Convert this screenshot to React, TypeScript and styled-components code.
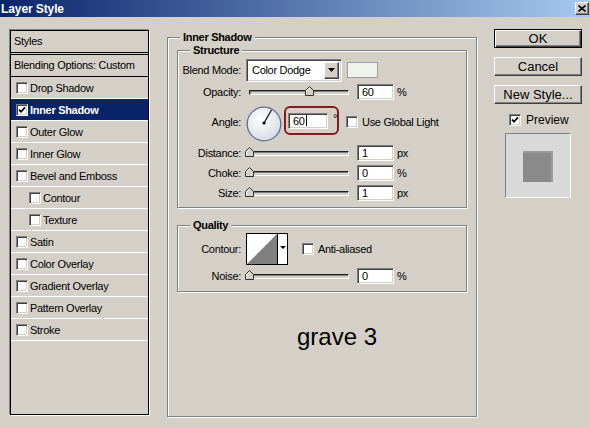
import styled, { createGlobalStyle, css } from 'styled-components'

const GlobalStyle = createGlobalStyle`
  html, body {
    margin: 0;
    padding: 0;
    background: #d4d0c8;
  }
  body {
    font-family: 'Liberation Sans', Tahoma, Arial, sans-serif;
    font-size: 11px;
    letter-spacing: -0.3px;
    color: #000;
  }
`

type StyleItem = { label: string; checked?: boolean; selected?: boolean; indent?: boolean }

const styleItems: StyleItem[] = [
  { label: 'Drop Shadow' },
  { label: 'Inner Shadow', checked: true, selected: true },
  { label: 'Outer Glow' },
  { label: 'Inner Glow' },
  { label: 'Bevel and Emboss' },
  { label: 'Contour', indent: true },
  { label: 'Texture', indent: true },
  { label: 'Satin' },
  { label: 'Color Overlay' },
  { label: 'Gradient Overlay' },
  { label: 'Pattern Overlay' },
  { label: 'Stroke' },
]

const sunken = css`
  border: 1px solid;
  border-color: #808080 #fff #fff #808080;
  box-shadow: inset 1px 1px 0 #404040, inset -1px -1px 0 #d4d0c8;
`

const raised = css`
  border: 1px solid;
  border-color: #fff #404040 #404040 #fff;
  box-shadow: inset -1px -1px 0 #808080, inset 1px 1px 0 #d4d0c8;
`

const Window = styled.div`
  width: 590px;
  height: 428px;
  background: #d4d0c8;
  overflow: hidden;
`

const TitleBar = styled.div`
  height: 17px;
  display: flex;
  align-items: center;
  justify-content: space-between;
  padding: 0 1px;
  background: linear-gradient(to right, #0a246a, #a6caf0);
`

const Title = styled.span`
  color: #fff;
  font-weight: bold;
  font-size: 12px;
  letter-spacing: -0.1px;
`

const CloseButton = styled.span`
  width: 14px;
  height: 13px;
  box-sizing: border-box;
  background: #d4d0c8;
  display: flex;
  align-items: center;
  justify-content: center;
  ${raised}
`

const Body = styled.div`
  display: flex;
  align-items: flex-start;
  padding-left: 10px;
`

/* ---------- left list ---------- */

const StylesPanel = styled.div`
  width: 139px;
  height: 385px;
  margin-top: 13px;
  box-sizing: border-box;
  border: 1px solid #000;
  box-shadow: -1px -1px 0 #808080, 1px 1px 0 #fff;
  flex: none;
`

const PanelHeader = styled.div`
  height: 21px;
  line-height: 21px;
  padding-left: 3px;
  border-bottom: 3px double #000;
`

const BlendingRow = styled.div`
  height: 21px;
  line-height: 21px;
  padding-left: 3px;
  border-bottom: 1px solid #000;
`

const StyleRow = styled.div<{ $indent?: boolean; $selected?: boolean }>`
  height: 21px;
  display: flex;
  align-items: center;
  gap: 2px;
  padding-left: ${p => (p.$indent ? 18 : 5)}px;
  border-bottom: 1px solid #fff;
  ${p =>
    p.$selected &&
    css`
      background: #0a246a;
      color: #fff;
      font-weight: bold;
    `}
`

const CheckBox = styled.span`
  width: 12px;
  height: 12px;
  box-sizing: border-box;
  flex: none;
  background: #fff;
  display: flex;
  align-items: center;
  justify-content: center;
  ${sunken}
`

const Check = ({ on }: { on?: boolean }) => (
  <CheckBox>
    {on && (
      <svg width="8" height="8" viewBox="0 0 8 8">
        <path d="M1 3.6 L3 5.8 L7 1.4" fill="none" stroke="#000" strokeWidth="1.7" />
      </svg>
    )}
  </CheckBox>
)

/* ---------- center ---------- */

const Main = styled.div`
  width: 310px;
  margin: 14px 0 0 18px;
  flex: none;
`

const Group = styled.fieldset<{ $outer?: boolean }>`
  margin: 0;
  min-width: 0;
  box-sizing: border-box;
  border: 1px solid #808080;
  box-shadow: inset 1px 1px 0 #fff, 1px 1px 0 #fff;
  ${p =>
    p.$outer
      ? css`
          height: 386px;
          padding: 0 9px;
        `
      : css`
          padding: 0;
        `}
`

const Legend = styled.legend<{ $ml: number }>`
  margin-left: ${p => p.$ml}px;
  padding: 0 3px;
  font-weight: bold;
  line-height: 13px;
  background: #d4d0c8;
`

const Row = styled.div<{ $h: number }>`
  display: flex;
  align-items: center;
  height: ${p => p.$h}px;
`

const Label = styled.span`
  width: 63px;
  margin-right: 5px;
  text-align: right;
  flex: none;
`

const SelectBox = styled.div`
  width: 96px;
  height: 23px;
  box-sizing: border-box;
  background: #fff;
  display: flex;
  align-items: center;
  padding: 2px;
  ${sunken}
`

const SelectText = styled.span`
  flex: 1;
  padding-left: 3px;
`

const SelectButton = styled.span`
  width: 15px;
  height: 17px;
  box-sizing: border-box;
  background: #d4d0c8;
  display: flex;
  align-items: center;
  justify-content: center;
  ${raised}
`

const Swatch = styled.span`
  width: 31px;
  height: 16px;
  margin-left: 5px;
  box-sizing: border-box;
  background: #eef3ec;
  border: 1px solid #a0a0a0;
`

const Track = styled.div`
  position: relative;
  width: 100px;
  height: 5px;
  margin: 0 8px 0 3px;
  box-sizing: border-box;
  flex: none;
  background: #d4d0c8;
  border: 1px solid #202020;
  border-right-color: #fff;
  border-bottom-color: #fff;
  box-shadow: inset 1px 1px 0 #808080;
`

const Thumb = styled.svg`
  position: absolute;
  top: -5px;
`

const Field = styled.div<{ $w: number }>`
  width: ${p => p.$w}px;
  height: 16px;
  box-sizing: border-box;
  background: #fff;
  padding-left: 4px;
  display: flex;
  align-items: center;
  flex: none;
  ${sunken}
`

const Caret = styled.span`
  width: 1px;
  height: 11px;
  margin-left: 1px;
  background: #000;
`

const Unit = styled.span`
  margin-left: 3px;
`

const Dial = styled.svg`
  flex: none;
  margin-top: 3px;
`

const Highlight = styled.div`
  width: 55px;
  height: 29px;
  margin-left: 2px;
  box-sizing: border-box;
  border: 2px solid #861a1c;
  border-radius: 6px;
  display: flex;
  align-items: center;
  padding-left: 2px;
  margin-top: -3px;
`

const Degree = styled.span`
  align-self: flex-start;
  margin: 4px 0 0 5px;
`

const InlineCheck = styled.label<{ $ml: number }>`
  display: flex;
  align-items: center;
  gap: 4px;
  margin-left: ${p => p.$ml}px;
`

const QualityGroup = styled(Group)`
  margin-top: 11px;
`

const Caption = styled.div`
  margin: 31px 0 0 120px;
  font-family: 'Liberation Sans', Arial, sans-serif;
  font-size: 24px;
  line-height: 28px;
  letter-spacing: 0;
`

/* ---------- right column ---------- */

const Side = styled.div`
  width: 88px;
  margin: 12px 0 0 17px;
  flex: none;
`

const Button = styled.button<{ $default?: boolean }>`
  display: flex;
  align-items: center;
  justify-content: center;
  width: 100%;
  height: 19px;
  margin: 0 0 9px;
  padding: 0;
  box-sizing: border-box;
  background: #d4d0c8;
  font-family: inherit;
  font-size: 13px;
  letter-spacing: 0;
  color: #000;
  ${raised}
  ${p =>
    p.$default &&
    css`
      border-color: #000;
      box-shadow: inset 1px 1px 0 #fff, inset -1px -1px 0 #404040, inset -2px -2px 0 #808080;
    `}
`

const PreviewToggle = styled.label`
  display: flex;
  align-items: center;
  gap: 5px;
  height: 18px;
  margin: -2px 0 0 15px;
  font-size: 12px;
  letter-spacing: 0;
`

const PreviewBox = styled.div`
  width: 66px;
  height: 65px;
  margin: 4px 0 0 11px;
  box-sizing: border-box;
  background: #d9d9d9;
  border: 1px solid;
  border-color: #808080 #fff #fff #808080;
  display: flex;
  align-items: center;
  justify-content: center;
`

const PreviewSwatch = styled.div`
  width: 30px;
  height: 31px;
  margin-top: 2px;
  background: #8a8a8a;
  box-shadow: inset -2px 2px 1px #9c9c9c;
`

const Slider = ({ pct }: { pct: number }) => (
  <Track>
    <Thumb width="9" height="10" viewBox="0 0 9 10" style={{ left: pct - 5 }}>
      <path d="M4.5 0.5 L8.5 4.5 L8.5 9.5 L0.5 9.5 L0.5 4.5 Z" fill="#d4d0c8" stroke="#303030" />
      <path d="M1.5 9 L1.5 4.9 L4.5 1.9" fill="none" stroke="#fff" />
    </Thumb>
  </Track>
)

const SliderRow = ({ label, value, max, unit }: { label: string; value: number; max: number; unit: string }) => (
  <Row $h={20}>
    <Label>{label}</Label>
    <Slider pct={(value / max) * 100} />
    <Field $w={37}>{value}</Field>
    <Unit>{unit}</Unit>
  </Row>
)

const DownArrow = () => (
  <svg width="7" height="4" viewBox="0 0 7 4">
    <path d="M0 0 H7 L3.5 4 Z" fill="#000" />
  </svg>
)

export default function App() {
  return (
    <Window>
      <GlobalStyle />
      <TitleBar>
        <Title>Layer Style</Title>
        <CloseButton>
          <svg width="8" height="7" viewBox="0 0 8 7">
            <path d="M0.5 0.5 L7.5 6.5 M7.5 0.5 L0.5 6.5" stroke="#000" strokeWidth="1.6" />
          </svg>
        </CloseButton>
      </TitleBar>

      <Body>
        <StylesPanel>
          <PanelHeader>Styles</PanelHeader>
          <BlendingRow>Blending Options: Custom</BlendingRow>
          {styleItems.map(item => (
            <StyleRow key={item.label} $indent={item.indent} $selected={item.selected}>
              <Check on={item.checked} />
              {item.label}
            </StyleRow>
          ))}
        </StylesPanel>

        <Main>
          <Group $outer>
            <Legend $ml={3}>Inner Shadow</Legend>
            <Group>
              <Legend $ml={12}>Structure</Legend>
              <Row $h={26}>
                <Label>Blend Mode:</Label>
                <SelectBox>
                  <SelectText>Color Dodge</SelectText>
                  <SelectButton>
                    <DownArrow />
                  </SelectButton>
                </SelectBox>
                <Swatch />
              </Row>
              <Row $h={18}>
                <Label>Opacity:</Label>
                <Slider pct={60} />
                <Field $w={37}>60</Field>
                <Unit>%</Unit>
              </Row>
              <Row $h={42}>
                <Label>Angle:</Label>
                <Dial width="36" height="36" viewBox="0 0 36 36">
                  <defs>
                    <radialGradient id="dialFace" cx="40%" cy="35%" r="70%">
                      <stop offset="0%" stopColor="#ffffff" />
                      <stop offset="100%" stopColor="#d6dae4" />
                    </radialGradient>
                  </defs>
                  <circle cx="18" cy="18" r="16.8" fill="url(#dialFace)" stroke="#5f6f92" strokeWidth="1.3" />
                  <line x1="18" y1="17" x2="25.5" y2="4" stroke="#000" strokeWidth="1.2" />
                  <circle cx="18" cy="17" r="1.6" fill="#000" />
                </Dial>
                <Highlight>
                  <Field $w={40}>
                    60
                    <Caret />
                  </Field>
                  <Degree>°</Degree>
                </Highlight>
                <InlineCheck $ml={7}>
                  <Check />
                  Use Global Light
                </InlineCheck>
              </Row>
              <SliderRow label="Distance:" value={1} max={250} unit="px" />
              <SliderRow label="Choke:" value={0} max={100} unit="%" />
              <SliderRow label="Size:" value={1} max={250} unit="px" />
              <Row $h={4} />
            </Group>

            <QualityGroup>
              <Legend $ml={12}>Quality</Legend>
              <Row $h={34}>
                <Label>Contour:</Label>
                <svg width="42" height="32" viewBox="0 0 42 32">
                  <rect x="0.5" y="0.5" width="41" height="31" fill="#fff" stroke="#000" />
                  <polygon points="1,31 31,1 31,31" fill="#808080" />
                  <line x1="31.5" y1="1" x2="31.5" y2="31" stroke="#000" />
                  <path d="M34 13 H40 L37 16 Z" fill="#000" />
                </svg>
                <InlineCheck $ml={14}>
                  <Check />
                  Anti-aliased
                </InlineCheck>
              </Row>
              <SliderRow label="Noise:" value={0} max={100} unit="%" />
              <Row $h={5} />
            </QualityGroup>

            <Caption>grave 3</Caption>
          </Group>
        </Main>

        <Side>
          <Button $default>OK</Button>
          <Button>Cancel</Button>
          <Button>New Style...</Button>
          <PreviewToggle>
            <Check on />
            Preview
          </PreviewToggle>
          <PreviewBox>
            <PreviewSwatch />
          </PreviewBox>
        </Side>
      </Body>
    </Window>
  )
}
